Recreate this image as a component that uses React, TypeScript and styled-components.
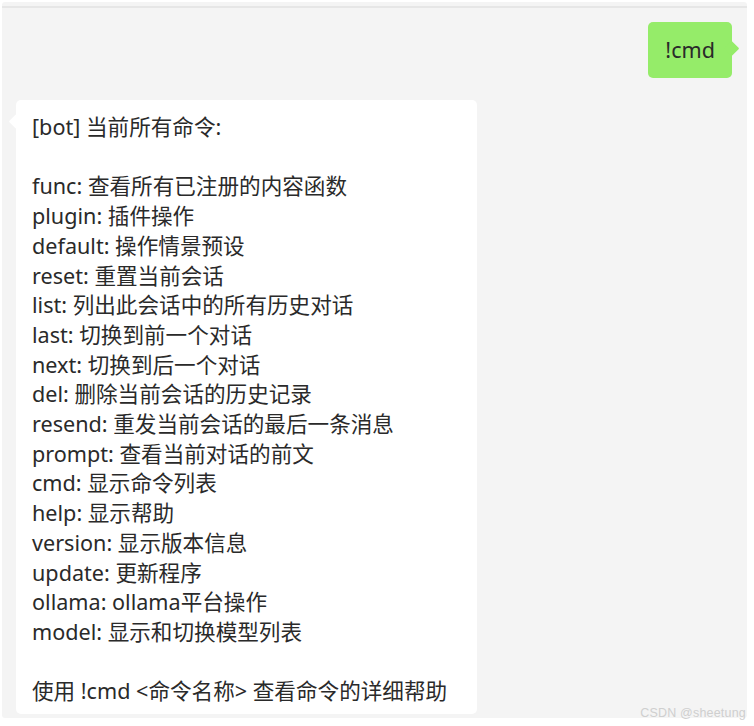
import React from "react";
import styled, { createGlobalStyle } from "styled-components";

const Global = createGlobalStyle`
  html, body { margin: 0; padding: 0; background: #ffffff; }
  body { width: 754px; height: 726px; overflow: hidden; }
`;

const Page = styled.div`
  position: relative;
  width: 754px;
  height: 726px;
  padding: 2px 7px 8px 2px;
  box-sizing: border-box;
`;

const Panel = styled.div`
  height: 100%;
  background: #f4f4f4;
  border-radius: 3px;
  display: flex;
  flex-direction: column;
  font-family: "Noto Sans", "Noto Sans CJK SC", sans-serif;
  color: #2a2a2a;
`;

const TopBar = styled.div`
  height: 4px;
  border-bottom: 2px solid #e6e6e6;
`;

const Thread = styled.div`
  display: flex;
  flex-direction: column;
  padding: 14px 15px 0 14px;
  gap: 22px;
`;

const Row = styled.div<{ $self?: boolean }>`
  display: flex;
  justify-content: ${(p) => (p.$self ? "flex-end" : "flex-start")};
`;

const Bubble = styled.div<{ $self?: boolean }>`
  position: relative;
  background: ${(p) => (p.$self ? "#95ec69" : "#ffffff")};
  border-radius: 5px;
  font-size: 21.6px;
  line-height: ${(p) => (p.$self ? "56px" : "29.7px")};
  padding: ${(p) => (p.$self ? "0 17px" : "12px 30px 8px 16px")};
  white-space: pre;
  ${(p) => (p.$self ? "height: 56px; box-sizing: border-box;" : "")}

  &::before {
    content: "";
    position: absolute;
    top: ${(p) => (p.$self ? "21px" : "16px")};
    ${(p) => (p.$self ? "right: -5px;" : "left: -5px;")}
    width: 11px;
    height: 11px;
    background: inherit;
    transform: rotate(45deg);
    border-radius: 1px;
  }
`;

const Watermark = styled.div`
  position: absolute;
  right: 8px;
  bottom: 6px;
  font-family: "Liberation Sans", "DejaVu Sans", sans-serif;
  font-size: 12.5px;
  color: #cfcfcf;
  letter-spacing: 0.2px;
`;

const lines = [
  "[bot] 当前所有命令:",
  "",
  "func: 查看所有已注册的内容函数",
  "plugin: 插件操作",
  "default: 操作情景预设",
  "reset: 重置当前会话",
  "list: 列出此会话中的所有历史对话",
  "last: 切换到前一个对话",
  "next: 切换到后一个对话",
  "del: 删除当前会话的历史记录",
  "resend: 重发当前会话的最后一条消息",
  "prompt: 查看当前对话的前文",
  "cmd: 显示命令列表",
  "help: 显示帮助",
  "version: 显示版本信息",
  "update: 更新程序",
  "ollama: ollama平台操作",
  "model: 显示和切换模型列表",
  "",
  "使用 !cmd <命令名称> 查看命令的详细帮助",
];

export default function App() {
  return (
    <Page>
      <Global />
      <Panel>
        <TopBar />
        <Thread>
          <Row $self>
            <Bubble $self>!cmd</Bubble>
          </Row>
          <Row>
            <Bubble>{lines.join("\n")}</Bubble>
          </Row>
        </Thread>
      </Panel>
      <Watermark>CSDN @sheetung</Watermark>
    </Page>
  );
}
